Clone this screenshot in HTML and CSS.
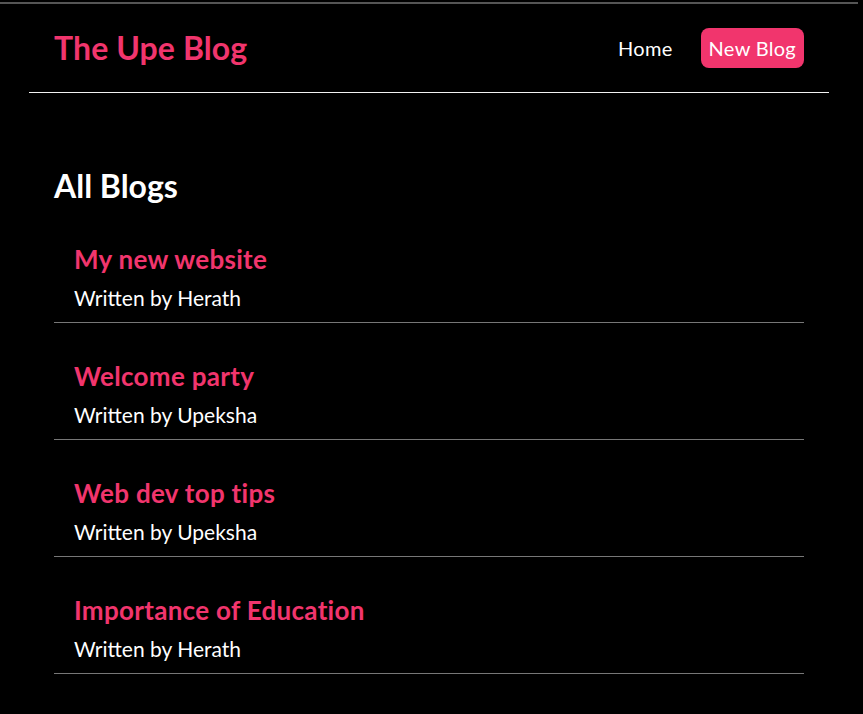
FILE: index.html
```html
<!DOCTYPE html>
<html lang="en">
<head>
<meta charset="utf-8">
<title>The Upe Blog</title>
<link rel="stylesheet" href="styles.css">
</head>
<body>
<div class="topbar"></div>
<div class="app">
  <nav class="navbar">
    <h1 class="brand">The Upe Blog</h1>
    <div class="links">
      <a class="link" href="#">Home</a>
      <a class="link link-new" href="#">New Blog</a>
    </div>
  </nav>
  <main class="content">
    <h2 class="page-title">All Blogs</h2>
    <div class="blog-preview">
      <h2 class="blog-title">My new website</h2>
      <p class="blog-author">Written by Herath</p>
    </div>
    <div class="blog-preview">
      <h2 class="blog-title">Welcome party</h2>
      <p class="blog-author">Written by Upeksha</p>
    </div>
    <div class="blog-preview">
      <h2 class="blog-title">Web dev top tips</h2>
      <p class="blog-author">Written by Upeksha</p>
    </div>
    <div class="blog-preview">
      <h2 class="blog-title">Importance of Education</h2>
      <p class="blog-author">Written by Herath</p>
    </div>
  </main>
</div>
</body>
</html>
```
FILE: styles.css
```css
* { box-sizing: border-box; }
html, body { margin: 0; padding: 0; background: #000; }
body {
  font-family: "Lato", "Open Sans", sans-serif;
  color: #fff;
  padding-right: 5px;
}
.topbar {
  height: 2px;
  margin-top: 2px;
  background: #555;
}
.navbar {
  max-width: 800px;
  margin: 0 auto;
  padding: 24px 25px;
  display: flex;
  align-items: center;
  border-bottom: 1px solid #f2f2f2;
  height: 89px;
}
.brand {
  margin: 0;
  font-size: 32px;
  line-height: 40px;
  font-weight: 700;
  color: #f1356d;
  letter-spacing: 0.1px;
}
.links {
  margin-left: auto;
  display: flex;
  align-items: center;
  gap: 20px;
}
.link {
  color: #fff;
  text-decoration: none;
  font-size: 20px;
  line-height: 24px;
  letter-spacing: 0.3px;
  padding: 8px;
  border-radius: 8px;
}
.link-new {
  background: #f1356d;
}
.content {
  max-width: 750px;
  margin: 0 auto;
  padding-top: 75px;
}
.page-title {
  margin: 0 0 28px;
  font-size: 32px;
  line-height: 36px;
  font-weight: 700;
}
.blog-preview {
  padding: 11px 20px 10px;
  margin: 26px 0;
  border-bottom: 1px solid #777;
}
.blog-title {
  margin: 0 0 9px;
  font-size: 26px;
  line-height: 32px;
  font-weight: 700;
  letter-spacing: 0.3px;
  color: #f1356d;
}
.blog-author {
  margin: 0;
  font-size: 21px;
  line-height: 28px;
}
```
